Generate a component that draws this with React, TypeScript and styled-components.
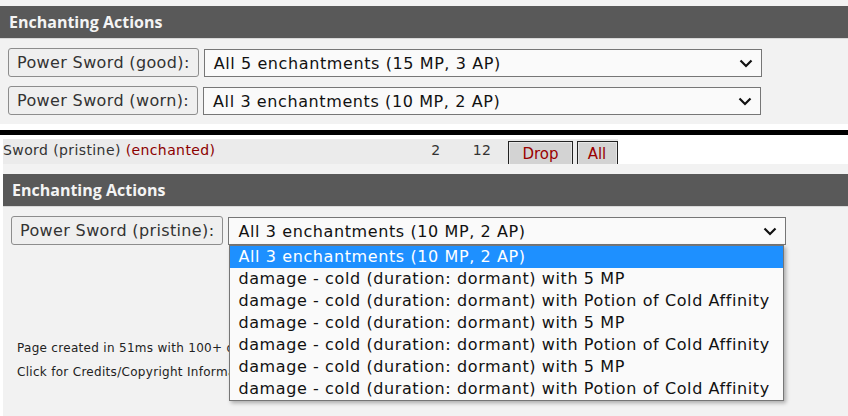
import React from "react";
import styled, { createGlobalStyle } from "styled-components";

const GlobalStyle = createGlobalStyle`
  html, body { margin: 0; padding: 0; background: #ffffff; }
  body { font-family: "DejaVu Sans", sans-serif; color: #333; }
  * { box-sizing: border-box; }
`;

const Page = styled.div`
  width: 848px;
  height: 416px;
  display: flex;
  flex-direction: column;
  overflow: hidden;
`;

const Panel = styled.section<{ $grow?: boolean }>`
  background: #f2f2f2;
  padding-top: ${(p) => (p.$grow ? "10px" : "6px")};
  height: ${(p) => (p.$grow ? "auto" : "124px")};
  flex: ${(p) => (p.$grow ? "1" : "none")};
`;

const Header = styled.h2`
  margin: 0;
  height: 33px;
  background: #595959;
  border-bottom: 1px solid #d8d8d8;
  color: #f4f4f4;
  font-family: "Open Sans", sans-serif;
  font-weight: 700;
  font-size: 16px;
  line-height: 32px;
  padding-left: ${(p: { $indent?: number }) => p.$indent ?? 9}px;
`;

const Rows = styled.div<{ $left: number }>`
  display: flex;
  flex-direction: column;
  gap: 9px;
  padding: 9px 0 0 ${(p) => p.$left}px;
`;

const ActionRow = styled.div`
  display: flex;
  align-items: flex-start;
  gap: 5px;
`;

const LabelButton = styled.button`
  height: 29px;
  padding: 0 8px;
  border: 1px solid #8d8d8d;
  border-radius: 3px;
  background: #efefef;
  color: #333;
  font-family: "DejaVu Sans", sans-serif;
  font-size: 16px;
  letter-spacing: 0.36px;
  white-space: nowrap;
`;

const SelectWrap = styled.div`
  position: relative;
  margin-top: 1px;
`;

const SelectBox = styled.div`
  width: 558px;
  height: 28px;
  border: 1px solid #767676;
  background: #fafafa;
  color: #111;
  font-size: 16px;
  letter-spacing: 0.6px;
  display: flex;
  align-items: center;
  justify-content: space-between;
  padding: 0 8px 0 9px;
  white-space: nowrap;
`;

const Chevron = () => (
  <svg width="14" height="9" viewBox="0 0 14 9">
    <polyline points="1.5,1.5 7,7 12.5,1.5" fill="none" stroke="#111" strokeWidth="2.2" />
  </svg>
);

const DropList = styled.ul`
  position: absolute;
  top: 100%;
  left: 1px;
  width: 555px;
  margin: 0;
  padding: 0;
  list-style: none;
  background: #fafafa;
  border: 1px solid #767676;
  box-shadow: 2px 2px 4px rgba(0, 0, 0, 0.3);
  z-index: 5;
`;

const Option = styled.li<{ $active?: boolean }>`
  height: 22px;
  line-height: 22px;
  padding-left: 8px;
  font-size: 16px;
  letter-spacing: 0.6px;
  white-space: nowrap;
  background: ${(p) => (p.$active ? "#1e90ff" : "transparent")};
  color: ${(p) => (p.$active ? "#ffffff" : "#111")};
`;

const Divider = styled.div`
  height: 5px;
  margin-top: 6px;
  background: #000;
`;

const Lower = styled.div`
  flex: 1;
  display: flex;
  flex-direction: column;
  padding: 4px 0 0 3px;
`;

const ItemRow = styled.div`
  width: 615px;
  height: 25px;
  background: #ebebeb;
  display: grid;
  grid-template-columns: 413px 40px 52px auto auto;
  align-items: start;
  overflow: hidden;
  font-size: 14px;
  letter-spacing: 0.4px;
`;

const ItemName = styled.span`
  padding-top: 3px;
  color: #333;
  white-space: nowrap;
`;

const Enchanted = styled.span`
  color: #8b0000;
`;

const Num = styled.span`
  padding-top: 3px;
  text-align: center;
  color: #333;
`;

const ItemButton = styled.button<{ $w: number }>`
  width: ${(p) => p.$w}px;
  height: 28px;
  margin: 2px 0 0 ${(p) => (p.$w < 50 ? 3 : 0)}px;
  border: 1px solid #222;
  box-shadow: inset 0 0 0 1px #e6e6e6;
  background: #d3d3d3;
  color: #990000;
  font-family: "DejaVu Sans", sans-serif;
  font-size: 15px;
  line-height: 22px;
  display: flex;
  justify-content: center;
  align-items: flex-start;
  padding: 1px 0 0;
`;

const Footer = styled.div`
  margin-top: 91px;
  padding-left: 14px;
  font-size: 12px;
  letter-spacing: 0.3px;
  line-height: 24px;
  color: #222;
  white-space: nowrap;
`;

const options = [
  "All 3 enchantments (10 MP, 2 AP)",
  "damage - cold (duration: dormant) with 5 MP",
  "damage - cold (duration: dormant) with Potion of Cold Affinity",
  "damage - cold (duration: dormant) with 5 MP",
  "damage - cold (duration: dormant) with Potion of Cold Affinity",
  "damage - cold (duration: dormant) with 5 MP",
  "damage - cold (duration: dormant) with Potion of Cold Affinity",
];

export default function App() {
  return (
    <>
      <GlobalStyle />
      <Page>
        <Panel>
          <Header>Enchanting Actions</Header>
          <Rows $left={8}>
            <ActionRow>
              <LabelButton>Power Sword (good):</LabelButton>
              <SelectWrap>
                <SelectBox>
                  <span>All 5 enchantments (15 MP, 3 AP)</span>
                  <Chevron />
                </SelectBox>
              </SelectWrap>
            </ActionRow>
            <ActionRow>
              <LabelButton>Power Sword (worn):</LabelButton>
              <SelectWrap>
                <SelectBox>
                  <span>All 3 enchantments (10 MP, 2 AP)</span>
                  <Chevron />
                </SelectBox>
              </SelectWrap>
            </ActionRow>
          </Rows>
        </Panel>
        <Divider />
        <Lower>
          <ItemRow>
            <ItemName>
              Sword (pristine) <Enchanted>(enchanted)</Enchanted>
            </ItemName>
            <Num>2</Num>
            <Num>12</Num>
            <ItemButton $w={65}>Drop</ItemButton>
            <ItemButton $w={41}>All</ItemButton>
          </ItemRow>
          <Panel $grow>
            <Header $indent={9}>Enchanting Actions</Header>
            <Rows $left={8}>
              <ActionRow>
                <LabelButton>Power Sword (pristine):</LabelButton>
                <SelectWrap>
                  <SelectBox>
                    <span>All 3 enchantments (10 MP, 2 AP)</span>
                    <Chevron />
                  </SelectBox>
                  <DropList>
                    {options.map((o, i) => (
                      <Option key={i} $active={i === 0}>
                        {o}
                      </Option>
                    ))}
                  </DropList>
                </SelectWrap>
              </ActionRow>
            </Rows>
            <Footer>
              <div>Page created in 51ms with 100+ queries</div>
              <div>Click for Credits/Copyright Information</div>
            </Footer>
          </Panel>
        </Lower>
      </Page>
    </>
  );
}
